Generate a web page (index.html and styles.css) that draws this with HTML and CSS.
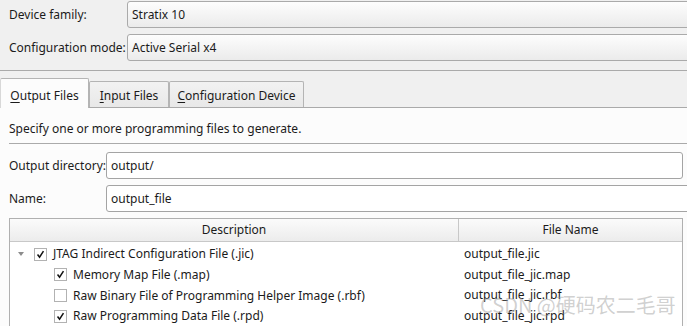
FILE: index.html
```html
<!DOCTYPE html>
<html lang="en">
<head>
    <meta charset="UTF-8">
    <title>Convert Programming File</title>
    <link rel="stylesheet" href="styles.css">
</head>
<body>
    <div class="top">
        <div class="field-row">
            <span class="label">Device family:</span>
            <div class="combo">Stratix 10</div>
        </div>
        <div class="field-row">
            <span class="label">Configuration mode:</span>
            <div class="combo">Active Serial x4</div>
        </div>
    </div>

    <div class="tabs">
        <div class="tab tab-active"><u>O</u>utput Files</div>
        <div class="tab tab-input"><u>I</u>nput Files</div>
        <div class="tab tab-config"><u>C</u>onfiguration Device</div>
    </div>

    <div class="pane">
        <p class="hint">Specify one or more programming files to generate.</p>

        <div class="form">
            <span class="label">Output directory:</span>
            <div class="input">output/</div>
            <span class="label">Name:</span>
            <div class="input input-wide">output_file</div>
        </div>

        <div class="table">
            <div class="thead">
                <div class="th th-desc">Description</div>
                <div class="th">File Name</div>
            </div>
            <div class="rows">
                <div class="row">
                    <div class="cell-desc">
                        <span class="arrow"></span>
                        <span class="check"><svg viewBox="0 0 13 13"><path d="M3 6.5 L5.4 9.6 L10 2.6"/></svg></span>
                        JTAG Indirect Configuration File (.jic)
                    </div>
                    <div class="cell-file">output_file.jic</div>
                </div>
                <div class="row">
                    <div class="cell-desc child">
                        <span class="check"><svg viewBox="0 0 13 13"><path d="M3 6.5 L5.4 9.6 L10 2.6"/></svg></span>
                        Memory Map File (.map)
                    </div>
                    <div class="cell-file">output_file_jic.map</div>
                </div>
                <div class="row">
                    <div class="cell-desc child">
                        <span class="check"></span>
                        Raw Binary File of Programming Helper Image (.rbf)
                    </div>
                    <div class="cell-file">output_file_jic.rbf</div>
                </div>
                <div class="row">
                    <div class="cell-desc child">
                        <span class="check"><svg viewBox="0 0 13 13"><path d="M3 6.5 L5.4 9.6 L10 2.6"/></svg></span>
                        Raw Programming Data File (.rpd)
                    </div>
                    <div class="cell-file">output_file_jic.rpd</div>
                </div>
            </div>
        </div>
    </div>

    <div class="watermark">CSDN @硬码农二毛哥</div>
</body>
</html>
```

FILE: styles.css
```css
body {
    margin: 0;
    width: 687px;
    height: 326px;
    overflow: hidden;
    position: relative;
    background: #f0f0f0;
    font-family: "Noto Sans", "Open Sans", sans-serif;
    font-size: 12px;
    color: #1b1b1b;
}

/* bagian atas: device family + mode */
.top {
    padding: 1px 0 9px 9px;
    border-bottom: 1px solid #aaaaaa;
    display: flex;
    flex-direction: column;
    gap: 6px;
}
.field-row {
    display: flex;
    align-items: center;
    height: 27px;
}
.top .label {
    width: 118px;
}
.combo {
    flex: 1;
    box-sizing: border-box;
    height: 27px;
    line-height: 25px;
    margin-right: -10px;
    padding-left: 4px;
    border: 1px solid #aaaaaa;
    border-radius: 3px;
    background: linear-gradient(#fdfdfd, #ebebeb);
}

/* tab */
.tabs {
    display: flex;
    align-items: flex-end;
    margin-top: 7px;
    height: 29px;
}
.tab {
    box-sizing: border-box;
    height: 26px;
    padding-top: 2px;
    line-height: 24px;
    text-align: center;
    border: 1px solid #b4b4b4;
    border-bottom: none;
    border-radius: 2px 2px 0 0;
    background: linear-gradient(#f2f2f2, #e8e8e8);
}
.tab u {
    text-decoration-thickness: 1px;
    text-underline-offset: 2px;
}
.tab-active {
    width: 89px;
    height: 30px;
    padding-top: 5px;
    background: #fcfcfc;
    margin-bottom: -1px;
    position: relative;
    border-left-color: #d8d8d8;
}
.tab-input { width: 80px; }
.tab-config { width: 135px; }

/* panel */
.pane {
    border-top: 1px solid #aaaaaa;
    background: #fcfcfc;
    height: 218px;
}
.hint {
    margin: 0 0 0 9px;
    padding: 12px 0 6px;
    line-height: 17px;
    border-bottom: 1px solid #aaaaaa;
}
.form {
    display: grid;
    grid-template-columns: 97px 1fr;
    row-gap: 6px;
    align-items: center;
    padding: 8px 0 0 9px;
}
.input {
    box-sizing: border-box;
    height: 27px;
    line-height: 25px;
    padding-left: 4px;
    border: 1px solid #a4a4a4;
    border-radius: 3px;
    background: #ffffff;
    margin-right: 4px;
}
.input-wide {
    margin-right: -10px;
}

/* tabel */
.table {
    margin: 6px 4px 0 9px;
    border: 1px solid #b0b0b0;
    border-bottom: none;
    background: #ffffff;
    height: 108px;
}
.thead {
    display: grid;
    grid-template-columns: 449px 1fr;
    height: 22px;
    border-bottom: 1px solid #c8c8c8;
    background: linear-gradient(#fbfbfb, #ececec);
}
.th {
    text-align: center;
    line-height: 22px;
}
.th-desc {
    border-right: 1px solid #c8c8c8;
}
.rows {
    padding-top: 2px;
}
.row {
    display: grid;
    grid-template-columns: 450px 1fr;
    height: 20.67px;
    line-height: 20px;
}
.cell-desc {
    display: flex;
    align-items: center;
    padding-left: 8px;
    white-space: nowrap;
}
.cell-desc.child {
    padding-left: 44px;
}
.cell-file {
    padding-left: 4px;
}
.arrow {
    width: 0;
    height: 0;
    border-left: 3.5px solid transparent;
    border-right: 3.5px solid transparent;
    border-top: 4px solid #8c8c8c;
    margin-right: 10px;
}
.check {
    box-sizing: border-box;
    width: 13px;
    height: 13px;
    border: 1px solid #b2b2b2;
    background: #ffffff;
    margin-right: 6px;
    display: inline-flex;
}
.check svg {
    width: 11px;
    height: 11px;
    fill: none;
    stroke: #111111;
    stroke-width: 1.8;
}

.watermark {
    position: absolute;
    left: 480px;
    top: 291px;
    font-family: "Noto Sans CJK SC", sans-serif;
    font-size: 20px;
    line-height: 28px;
    color: rgba(150, 150, 150, 0.45);
    pointer-events: none;
}
```
